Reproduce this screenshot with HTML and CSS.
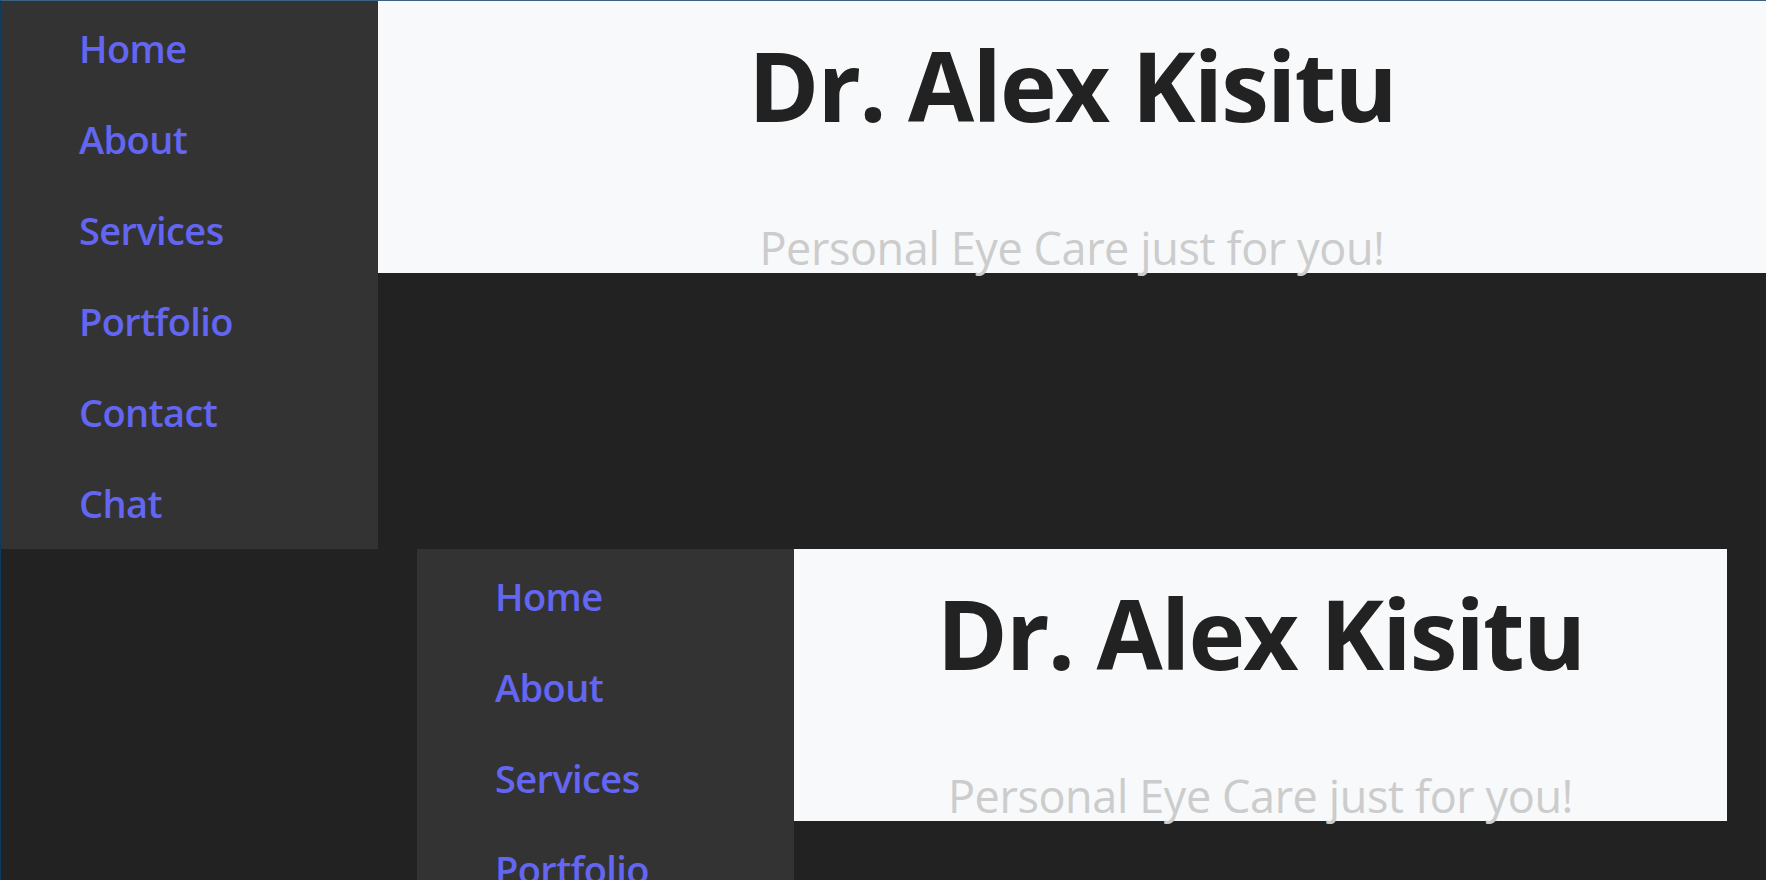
FILE: index.html
```html
<!DOCTYPE html>
<html lang="en">
<head>
<meta charset="utf-8">
<title>Dr. Alex Kisitu</title>
<link rel="stylesheet" href="styles.css">
</head>
<body>
<div class="layout">
  <nav class="sidebar">
    <ul class="nav-list">
      <li><a href="#">Home</a></li>
      <li><a href="#">About</a></li>
      <li><a href="#">Services</a></li>
      <li><a href="#">Portfolio</a></li>
      <li><a href="#">Contact</a></li>
      <li><a href="#">Chat</a></li>
    </ul>
  </nav>
  <header class="hero">
    <h1 class="hero-title">Dr. Alex Kisitu</h1>
    <p class="hero-sub">Personal Eye Care just for you!</p>
  </header>
  <main class="main">
    <div class="layout layout-inner">
      <nav class="sidebar">
        <ul class="nav-list">
          <li><a href="#">Home</a></li>
          <li><a href="#">About</a></li>
          <li><a href="#">Services</a></li>
          <li><a href="#">Portfolio</a></li>
          <li><a href="#">Contact</a></li>
          <li><a href="#">Chat</a></li>
        </ul>
      </nav>
      <header class="hero">
        <h1 class="hero-title">Dr. Alex Kisitu</h1>
        <p class="hero-sub">Personal Eye Care just for you!</p>
      </header>
    </div>
  </main>
</div>
</body>
</html>
```
FILE: styles.css
```css
html, body {
  margin: 0;
  padding: 0;
}
body {
  background: #222222;
  font-family: "Open Sans", "Noto Sans", sans-serif;
  border-top: 1px solid #3b6282;
  border-left: 1px solid #0c3c60;
  min-height: 900px;
}
.layout {
  display: grid;
  grid-template-columns: 377px 1fr;
  align-items: start;
}
.sidebar {
  background: #333333;
}
.nav-list {
  list-style: none;
  margin: 0;
  padding: 2px 0 0;
}
.nav-list li {
  height: 91px;
  line-height: 91px;
  padding-left: 78px;
}
.nav-list a {
  color: #6366f1;
  text-decoration: none;
  font-size: 38px;
  font-weight: 600;
  letter-spacing: -0.6px;
}
.hero {
  background: #f8f9fa;
  height: 272px;
  text-align: center;
  padding-top: 26px;
  box-sizing: border-box;
}
.hero-title {
  margin: 0;
  font-size: 96px;
  line-height: 115px;
  font-weight: 700;
  color: #222222;
  letter-spacing: -1.8px;
}
.hero-sub {
  margin: 79px 0 0;
  font-size: 45px;
  line-height: 54px;
  color: #cccccc;
  font-weight: 400;
  letter-spacing: -0.4px;
}
.main {
  grid-column: 2;
  padding: 0 39px;
}
```
